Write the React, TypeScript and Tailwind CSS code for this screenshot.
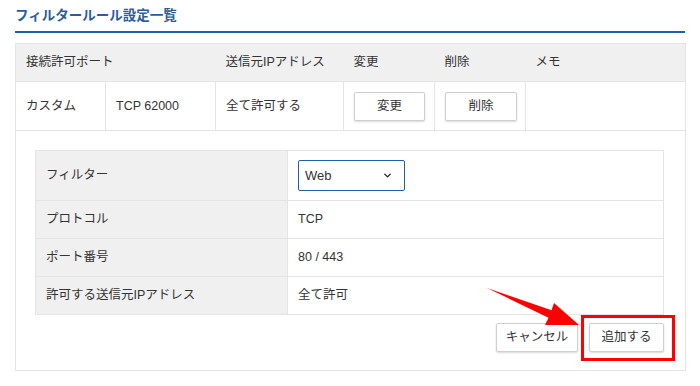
import { ChevronDown } from "lucide-react";

const font = { fontFamily: '"Liberation Sans", "Noto Sans CJK JP", sans-serif' };

const cell = "border border-[#e4e4e4] px-[10px] text-left font-normal";
const head = "border-y border-[#e4e4e4] px-[10px] text-left font-normal";

function Btn({ label, className = "" }: { label: string; className?: string }) {
  return (
    <button
      className={`h-[29px] rounded-[2px] border border-[#cfcfcf] bg-white text-[12.5px] text-[#333] shadow-[0_1px_2px_rgba(0,0,0,0.15)] ${className}`}
    >
      {label}
    </button>
  );
}

const detailRows: { label: string; value: string }[] = [
  { label: "プロトコル", value: "TCP" },
  { label: "ポート番号", value: "80 / 443" },
  { label: "許可する送信元IPアドレス", value: "全て許可" },
];

export default function App() {
  return (
    <div className="relative h-[386px] w-[700px] bg-white text-[12.5px] text-[#333]" style={font}>
      <div className="px-[15px] pt-[6px]">
        <h2 className="border-b-2 border-[#1f5fa8] pb-[5px] text-[13.5px] font-bold leading-[20px] text-[#2b5d9b]">
          フィルタールール設定一覧
        </h2>

        <table className="mt-[10px] w-[670px] table-fixed border-collapse">
          <colgroup>
            <col className="w-[90px]" />
            <col className="w-[110px]" />
            <col className="w-[128px]" />
            <col className="w-[91px]" />
            <col className="w-[91px]" />
            <col className="w-[160px]" />
          </colgroup>
          <thead>
            <tr className="h-[38px] bg-[#f0f0f0]">
              <th colSpan={2} className={`${head} border-l`}>接続許可ポート</th>
              <th className={head}>送信元IPアドレス</th>
              <th className={head}>変更</th>
              <th className={head}>削除</th>
              <th className={`${head} border-r`}>メモ</th>
            </tr>
          </thead>
          <tbody>
            <tr className="h-[49px]">
              <td className={cell}>カスタム</td>
              <td className={cell}>TCP 62000</td>
              <td className={cell}>全て許可する</td>
              <td className={cell}>
                <Btn label="変更" className="w-[71px]" />
              </td>
              <td className={cell}>
                <Btn label="削除" className="w-[72px]" />
              </td>
              <td className={cell}></td>
            </tr>
            <tr>
              <td colSpan={6} className="border border-[#e4e4e4] pb-[18px] pl-[19px] pr-[21px] pt-[19px]">
                <table className="w-[628px] table-fixed border-collapse">
                  <colgroup>
                    <col className="w-[252px]" />
                    <col className="w-[376px]" />
                  </colgroup>
                  <tbody>
                    <tr className="h-[50px]">
                      <td className={`${cell} bg-[#f0f0f0]`}>フィルター</td>
                      <td className={`${cell} px-[9px]`}>
                        <div className="flex h-[31px] w-[107px] items-center justify-between rounded-[2px] border-[1.5px] border-[#1f5fa8] bg-white pl-[6px] pr-[11px] text-[13px]">
                          <span>Web</span>
                          <ChevronDown size={11} strokeWidth={3} className="text-[#222]" />
                        </div>
                      </td>
                    </tr>
                    {detailRows.map((r) => (
                      <tr key={r.label} className="h-[38px]">
                        <td className={`${cell} bg-[#f0f0f0]`}>{r.label}</td>
                        <td className={`${cell} px-[9px]`}>{r.value}</td>
                      </tr>
                    ))}
                  </tbody>
                </table>
                <div className="mt-[8px] flex justify-end gap-[11px]">
                  <Btn label="キャンセル" className="w-[82px]" />
                  <div className="relative">
                    <Btn label="追加する" className="w-[75px]" />
                    <span className="pointer-events-none absolute -bottom-[9px] -left-[8px] -right-[11px] -top-[8px] border-[3px] border-[#ff0000]" />
                  </div>
                </div>
              </td>
            </tr>
          </tbody>
        </table>
      </div>

      <svg className="pointer-events-none absolute left-0 top-0" width="700" height="386" viewBox="0 0 700 386">
        <polygon points="487,288 551.5,310.3 554,303 579,325 545,325 548.5,317.7" fill="#ff0000" />
      </svg>
    </div>
  );
}
